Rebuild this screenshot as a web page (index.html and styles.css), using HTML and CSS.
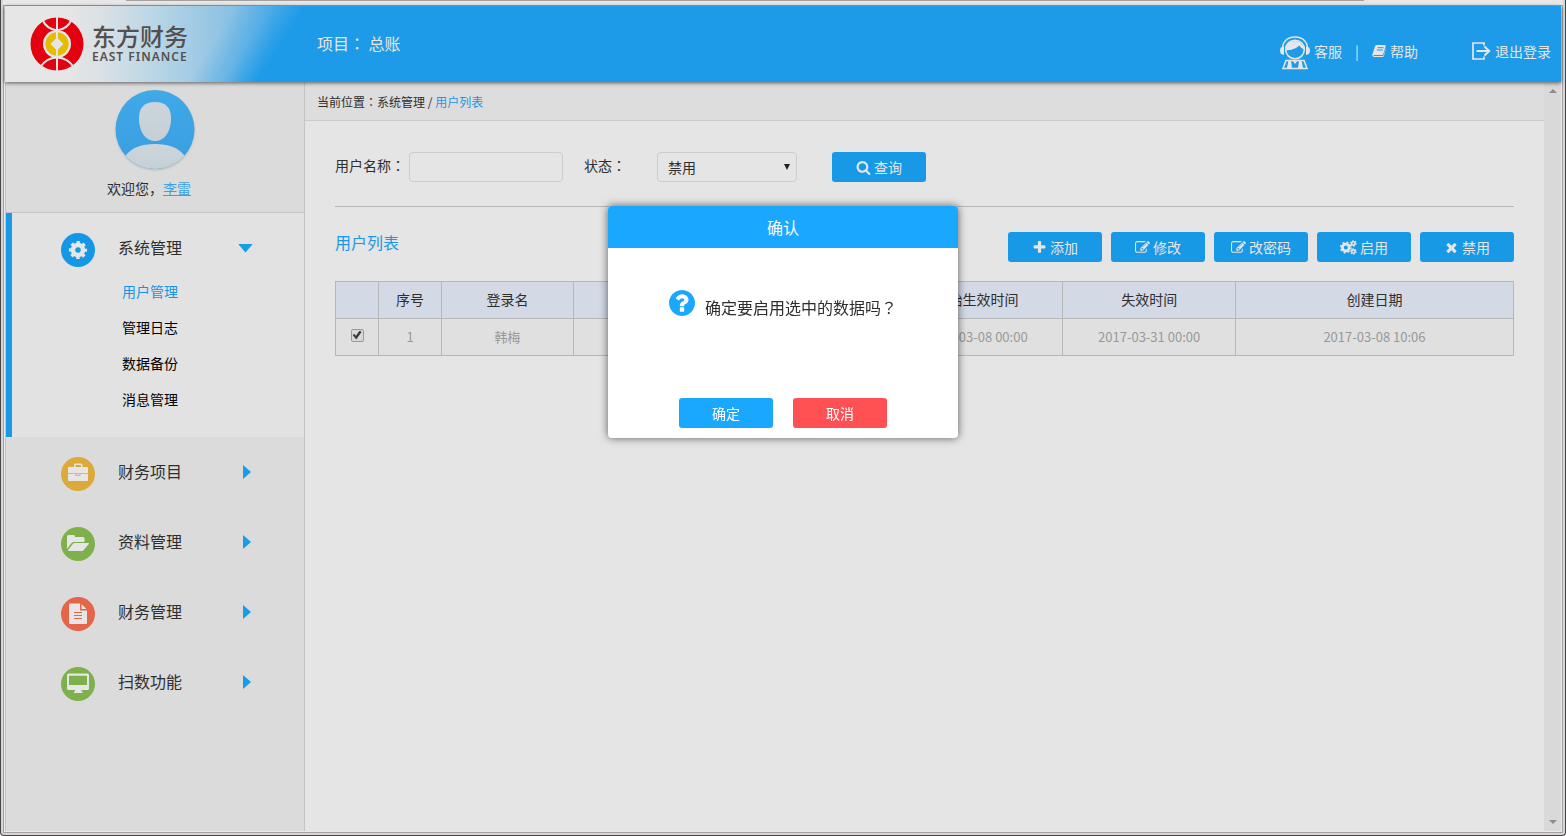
FILE: index.html
```html
<!DOCTYPE html>
<html lang="zh-CN">
<head>
<meta charset="utf-8">
<title>东方财务 - 用户列表</title>
<link rel="stylesheet" href="styles.css">
</head>
<body>
<svg class="defs" aria-hidden="true">
  <symbol id="i-search" viewBox="0 0 1792 1792"><path d="M1216 832q0-185-131.5-316.5t-316.5-131.5-316.5 131.5-131.5 316.5 131.5 316.5 316.5 131.5 316.5-131.5 131.5-316.5zm512 832q0 52-38 90t-90 38q-54 0-90-38l-343-342q-179 124-399 124-143 0-273.5-55.5t-225-150-150-225-55.5-273.5 55.5-273.5 150-225 225-150 273.5-55.5 273.5 55.5 225 150 150 225 55.5 273.5q0 220-124 399l343 343q37 37 37 90z"/></symbol>
  <symbol id="i-plus" viewBox="0 0 1792 1792"><path d="M1600 736v192q0 40-28 68t-68 28h-416v416q0 40-28 68t-68 28h-192q-40 0-68-28t-28-68v-416h-416q-40 0-68-28t-28-68v-192q0-40 28-68t68-28h416v-416q0-40 28-68t68-28h192q40 0 68 28t28 68v416h416q40 0 68 28t28 68z"/></symbol>
  <symbol id="i-edit" viewBox="0 0 1792 1792"><path d="M888 1184l116-116-152-152-116 116v56h96v96h56zm440-720q-16-16-33 1l-350 350q-17 17-1 33t33-1l350-350q17-17 1-33zm80 594v190q0 119-84.500 203.500t-203.500 84.500h-832q-119 0-203.500-84.500t-84.500-203.500v-832q0-119 84.500-203.500t203.500-84.500h832q63 0 117 25 15 7 18 23 3 17-9 29l-49 49q-14 14-32 8-23-6-45-6h-832q-66 0-113 47t-47 113v832q0 66 47 113t113 47h832q66 0 113-47t47-113v-126q0-13 9-22l64-64q15-15 35-7t20 29zm-96-738l288 288-672 672h-288v-288zm444 132l-92 92-288-288 92-92q28-28 68-28t68 28l152 152q28 28 28 68t-28 68z"/></symbol>
  <symbol id="i-times" viewBox="0 0 1792 1792"><path d="M1490 1322q0 40-28 68l-136 136q-28 28-68 28t-68-28l-294-294-294 294q-28 28-68 28t-68-28l-136-136q-28-28-28-68t28-68l294-294-294-294q-28-28-28-68t28-68l136-136q28-28 68-28t68 28l294 294 294-294q28-28 68-28t68 28l136 136q28 28 28 68t-28 68l-294 294 294 294q28 28 28 68z"/></symbol>
  <symbol id="i-question" viewBox="128 128 1536 1536"><path d="M1024 1376v-192q0-14-9-23t-23-9h-192q-14 0-23 9t-9 23v192q0 14 9 23t23 9h192q14 0 23-9t9-23zm256-672q0-88-55.500-163t-138.500-116-170-41q-243 0-371 213-15 24 8 42l132 100q7 6 19 6 16 0 25-12 53-68 86-92 34-24 86-24 48 0 85.500 26t37.500 59q0 38-20 61t-68 45q-63 28-115.500 86.500t-52.500 125.500v36q0 14 9 23t23 9h192q14 0 23-9t9-23q0-19 21.500-49.500t54.500-49.500q32-18 49-28.500t46-35 44.500-48 28-60.500 12.500-81zm384 192q0 209-103 385.500t-279.500 279.500-385.500 103-385.500-103-279.500-279.500-103-385.500 103-385.500 279.500-279.500 385.500-103 385.500 103 279.500 279.500 103 385.500z"/></symbol>
  <symbol id="i-cogs" viewBox="0 0 16 14">
    <g fill="none" stroke="currentColor">
      <circle cx="5.500" cy="7" r="3.200" stroke-width="2.600"/>
      <circle cx="5.500" cy="7" r="4.800" stroke-width="1.600" stroke-dasharray="1.900 1.870"/>
      <circle cx="12.600" cy="3.200" r="1.600" stroke-width="1.500"/>
      <circle cx="12.600" cy="3.200" r="2.500" stroke-width="1.200" stroke-dasharray="1.300 1.320"/>
      <circle cx="12.600" cy="10.800" r="1.600" stroke-width="1.500"/>
      <circle cx="12.600" cy="10.800" r="2.500" stroke-width="1.200" stroke-dasharray="1.300 1.320"/>
    </g>
  </symbol>
</svg>

<div class="window">
<div class="strip"><div class="strip-line"></div></div>
<div class="frame">
  <header class="header">
    <div class="brand">
      <svg class="brand-mark" viewBox="0 0 54 54" aria-hidden="true">
        <circle cx="27" cy="27" r="26.500" fill="#e3000f"/>
        <g fill="none" stroke="#e6e6e6" stroke-width="2">
          <path d="M12.500 3Q17 12.500 27 13.200Q37 12.500 41.500 3"/>
          <path d="M10.500 50Q16 41 27 40.500Q38 41 43.500 50"/>
          <path d="M27 0V14M27 40V54"/>
        </g>
        <circle cx="27" cy="27" r="14" fill="#e6e6e6"/>
        <circle cx="27" cy="27" r="11.700" fill="#e5bd00"/>
        <path d="M27 20.500L33.500 27L27 33.500L20.500 27Z" fill="#e6e6e6"/>
        <path d="M27 13V41" stroke="#e6e6e6" stroke-width="2"/>
      </svg>
      <div class="brand-text">
        <div class="brand-cn">东方财务</div>
        <div class="brand-en">EAST FINANCE</div>
      </div>
    </div>
    <div class="project">项目<span lang="zh-TW" class="punct">：</span> 总账</div>
    <nav class="tools">
      <a href="#" class="tool">
        <svg class="ic-service" viewBox="0 -4 30 38" aria-hidden="true">
          <g fill="none" stroke="currentColor">
            <circle cx="15" cy="13.500" r="9.300" stroke-width="1.600"/>
            <path d="M2.500 13C2.500 5 8 1 15 1S27.500 5 27.500 13" stroke-width="1.500"/>
            <path d="M3 32.500L6 24.500H24L27 32.500Z" stroke-width="1.500"/>
          </g>
          <path d="M0 14.500Q0 10.500 4 10.500V19Q0 18.500 0 14.500ZM30 14.500Q30 10.500 26 10.500V19Q30 18.500 30 14.500Z" fill="currentColor"/>
          <path d="M6 14.500Q6 5 15 5Q19 5 21 7Q18 13.500 6 14.500ZM20 7Q23.500 9 24.300 13.500Q20.500 12 19 9Z" fill="currentColor"/>
          <path d="M8.500 24.500H11L12 32.500H6.800ZM19 24.500H21.500L23.200 32.500H18ZM12.500 24.500L15 28L17.500 24.500Z" fill="currentColor"/>
        </svg>
        <span>客服</span>
      </a>
      <span class="bar">|</span>
      <a href="#" class="tool">
        <svg class="ic-book" viewBox="0 0 14 14" aria-hidden="true">
          <path d="M4.500 1H13Q14 1.200 13.700 2.300L11.300 10Q11 11 10 11H2.200Q1.400 11.200 1.700 12H10.500Q11.300 12 11.600 11.300L13.800 4.500L14 5L11.900 12Q11.500 13 10.500 13H2Q0 12.800 .3 10.700L3 2.300Q3.400 1.200 4.500 1Z" fill="currentColor"/>
          <path d="M5.600 3.700H11.600M4.900 6H10.900" stroke="#1e9be8" stroke-width="1"/>
        </svg>
        <span>帮助</span>
      </a>
      <a href="#" class="tool tool-exit">
        <svg class="ic-exit" viewBox="0 0 19 18" aria-hidden="true">
          <g fill="none" stroke="currentColor" stroke-width="1.700">
            <path d="M12 3.500V1H1V17H12V14.500"/>
            <path d="M4.500 9H17M12.500 4.500L17.200 9L12.500 13.500" stroke-width="2"/>
          </g>
        </svg>
        <span>退出登录</span>
      </a>
    </nav>
  </header>

  <div class="columns">
    <aside class="sidebar">
      <div class="profile">
        <svg class="avatar" viewBox="0 0 80 80" aria-hidden="true">
          <defs>
            <clipPath id="av"><circle cx="40" cy="39.500" r="39.500"/></clipPath>
            <linearGradient id="avb" x1="0" y1="0" x2="0" y2="1"><stop offset="0" stop-color="#40a9e8"/><stop offset="1" stop-color="#3a9de0"/></linearGradient>
            <linearGradient id="avf" x1="0" y1="0" x2="0" y2="1"><stop offset="0" stop-color="#ccd5dc"/><stop offset="1" stop-color="#c5d0d6"/></linearGradient>
          </defs>
          <g clip-path="url(#av)">
            <rect width="80" height="80" fill="url(#avb)"/>
            <path d="M40 12C50 12 56 17 56 28C56 41 50 51 40 51S24 41 24 28C24 17 30 12 40 12Z" fill="url(#avf)"/>
            <path d="M11 65Q20 54 40 54T69 65V80H11Z" fill="url(#avf)"/>
          </g>
        </svg>
        <div class="welcome">欢迎您，<a href="#">李雷</a></div>
      </div>
      <nav>
        <div class="group open">
          <a class="group-head" href="#">
            <svg class="badge blue" viewBox="0 0 34 34" aria-hidden="true">
              <circle cx="17" cy="17" r="5" fill="none" stroke="currentColor" stroke-width="4.500"/>
              <circle cx="17" cy="17" r="7.800" fill="none" stroke="currentColor" stroke-width="2.600" stroke-dasharray="3.400 2.726" stroke-dashoffset="1.700"/>
            </svg>
            <span class="label">系统管理</span>
            <svg class="arrow" viewBox="0 0 16 16" aria-hidden="true"><path d="M1 5Q0 4 1 4H14Q15 4 14 5L7.500 12.500Z"/></svg>
          </a>
          <ul class="sub">
            <li><a href="#" class="current">用户管理</a></li>
            <li><a href="#">管理日志</a></li>
            <li><a href="#">数据备份</a></li>
            <li><a href="#">消息管理</a></li>
          </ul>
        </div>
        <div class="group">
          <a class="group-head" href="#">
            <svg class="badge yellow" viewBox="0 0 34 34" aria-hidden="true">
              <path d="M13 10V8Q13 6.500 14.500 6.500H20Q21.500 6.500 21.500 8V10H26Q27 10 27 11V16.200H7V11Q7 10 8 10ZM14.500 8V10H20V8Z" fill="currentColor" fill-rule="evenodd"/>
              <path d="M7 17H14.500V18.800H19.500V17H27V23Q27 24 26 24H8Q7 24 7 23Z" fill="currentColor"/>
              <path d="M15.500 17H18.500V18H15.500Z" fill="currentColor"/>
            </svg>
            <span class="label">财务项目</span>
            <svg class="arrow" viewBox="0 0 16 16" aria-hidden="true"><path d="M5 1L13 8L5 15Z"/></svg>
          </a>
        </div>
        <div class="group">
          <a class="group-head" href="#">
            <svg class="badge green" viewBox="0 0 34 34" aria-hidden="true">
              <path d="M6 22V9.500Q6 8 7.500 8H12.500Q14 8 14 9.500V10H22Q23.500 10 23.500 11.500V15H13Q11.500 15 10.500 16Z" fill="currentColor"/>
              <path d="M13.500 16H27.500Q28.300 16.300 27.800 17L22.500 23.300Q22 24 21 24H7.500Q6.600 23.600 7.200 23L12 16.800Q12.600 16 13.500 16Z" fill="currentColor"/>
            </svg>
            <span class="label">资料管理</span>
            <svg class="arrow" viewBox="0 0 16 16" aria-hidden="true"><path d="M5 1L13 8L5 15Z"/></svg>
          </a>
        </div>
        <div class="group">
          <a class="group-head" href="#">
            <svg class="badge red" viewBox="0 0 34 34" aria-hidden="true">
              <path d="M9 6.500H19V13.500H26V26Q26 27 25 27H9Q8 27 8 26V7.500Q8 6.500 9 6.500ZM20.500 7L25.500 12H20.500Z" fill="currentColor"/>
              <path d="M13 15.500H21M13 18.500H21M13 21.500H21" stroke="#e46549" stroke-width="1.200"/>
            </svg>
            <span class="label">财务管理</span>
            <svg class="arrow" viewBox="0 0 16 16" aria-hidden="true"><path d="M5 1L13 8L5 15Z"/></svg>
          </a>
        </div>
        <div class="group">
          <a class="group-head" href="#">
            <svg class="badge green" viewBox="0 0 34 34" aria-hidden="true">
              <path fill-rule="evenodd" d="M7.500 6.500H26.500Q28 6.500 28 8V21.500Q28 23 26.500 23H20.500V24.500H21.500V26H13V24.500H14V23H7.500Q6 23 6 21.500V8Q6 6.500 7.500 6.500ZM8 8.700V18H26V8.700Z" fill="currentColor"/>
            </svg>
            <span class="label">扫数功能</span>
            <svg class="arrow" viewBox="0 0 16 16" aria-hidden="true"><path d="M5 1L13 8L5 15Z"/></svg>
          </a>
        </div>
      </nav>
    </aside>

    <main class="main">
      <div class="crumbs">当前位置<span lang="zh-TW" class="punct">：</span>系统管理 / <a href="#">用户列表</a></div>
      <div class="content">
        <form class="filters">
          <label for="uname">用户名称<span lang="zh-TW" class="punct">：</span></label>
          <input id="uname" type="text" class="text-box">
          <label for="state" class="state-label">状态<span lang="zh-TW" class="punct">：</span></label>
          <span class="select-wrap">
            <select id="state"><option>禁用</option></select>
          </span>
          <button type="button" class="btn"><svg class="ic"><use href="#i-search"/></svg>查询</button>
        </form>
        <div class="list-head">
          <h2>用户列表</h2>
          <div class="actions">
            <button type="button" class="btn"><svg class="ic"><use href="#i-plus"/></svg>添加</button>
            <button type="button" class="btn"><svg class="ic"><use href="#i-edit"/></svg>修改</button>
            <button type="button" class="btn"><svg class="ic"><use href="#i-edit"/></svg>改密码</button>
            <button type="button" class="btn"><svg class="ic wide"><use href="#i-cogs"/></svg>启用</button>
            <button type="button" class="btn"><svg class="ic"><use href="#i-times"/></svg>禁用</button>
          </div>
        </div>
        <table class="users">
          <colgroup><col class="c-check"><col class="c-no"><col class="c-login"><col class="c-name"><col class="c-date"><col class="c-date"><col></colgroup>
          <thead>
            <tr><th></th><th>序号</th><th>登录名</th><th></th><th>开始生效时间</th><th>失效时间</th><th>创建日期</th></tr>
          </thead>
          <tbody>
            <tr><td><input type="checkbox" class="tick" aria-label="选择韩梅" checked></td><td>1</td><td>韩梅</td><td></td><td>2017-03-08 00:00</td><td>2017-03-31 00:00</td><td>2017-03-08 10:06</td></tr>
          </tbody>
        </table>
      </div>
    </main>

    <div class="scroll" aria-hidden="true">
      <svg viewBox="0 0 8 4"><path d="M0 4L4 0L8 4Z"/></svg>
      <svg viewBox="0 0 8 4"><path d="M0 0L4 4L8 0Z"/></svg>
    </div>
  </div>
</div>
</div>

<div class="overlay">
  <section class="dialog" role="dialog" aria-labelledby="dlg-title">
    <h3 id="dlg-title">确认</h3>
    <div class="message">
      <svg class="ic-question" aria-hidden="true"><use href="#i-question"/></svg>
      <p>确定要启用选中的数据吗<span lang="zh-TW" class="punct">？</span></p>
    </div>
    <div class="dialog-actions">
      <button type="button" class="btn ok">确定</button>
      <button type="button" class="btn cancel">取消</button>
    </div>
  </section>
</div>
</body>
</html>
```
FILE: styles.css
```css
* { box-sizing: border-box; }

body {
  margin: 0;
  font-family: "Noto Sans CJK SC", sans-serif;
  font-size: 14px;
  line-height: 20px;
  color: #2e2e2e;
  background: #fff;
}

a { color: inherit; text-decoration: none; }
h2, h3, p, ul { margin: 0; padding: 0; font-weight: 400; }
ul { list-style: none; }
button, input, select { font: inherit; }

.defs { position: absolute; width: 0; height: 0; }
.punct { font-family: "Noto Sans CJK TC", sans-serif; }

/* window chrome */
.window {
  display: flex;
  flex-direction: column;
  min-height: 100vh;
  padding: 0 2px 2px;
  background: #d6d6d6;
  border: 1px solid #484446;
  border-top: 0;
  border-radius: 0 0 4px 4px;
}
.strip { height: 5px; background: #e8e8e8; padding: 0 199px 0 123px; }
.strip-line { height: 1px; background: #a5a1a1; }
.frame {
  flex: 1;
  display: flex;
  flex-direction: column;
  padding: 0 1px 1px;
  background: #e9e9e9;
  border: 1px solid #a5a1a1;
}

/* header */
.header {
  position: relative;
  display: flex;
  align-items: center;
  height: 76px;
  background: #1e9be8;
  color: #e6e6e6;
  box-shadow: 0 1px 4px rgba(0, 0, 0, .6);
}
.brand {
  display: flex;
  align-items: center;
  gap: 8px;
  width: 312px;
  height: 76px;
  padding: 0 0 1px 25px;
  background:
    linear-gradient(122deg, rgba(30, 155, 232, 0) 195px, rgba(30, 155, 232, .35) 226px, #1e9be8 254px),
    linear-gradient(90deg, #e6e6e6 60px, #dbe1e5 95px, #b9d6e6 150px, #92c4e4 215px, #66b3e6 270px);
}
.brand-mark { width: 54px; height: 54px; }
.brand-text { color: #55504e; }
.brand-cn { font-size: 24px; line-height: 24px; font-weight: 500; }
.brand-en {
  margin-top: 2px;
  font-family: "Noto Sans", sans-serif;
  font-size: 12px;
  line-height: 14px;
  font-weight: 600;
  letter-spacing: 1px;
}
.project { flex: 1; padding-bottom: 2px; font-size: 16px; }
.tools {
  display: flex;
  align-items: center;
  padding: 14px 10px 0 0;
}
.tool { display: flex; align-items: center; gap: 4px; }
.tool-exit { margin-left: 54px; }
.bar { width: 30px; text-align: center; }
.ic-service { width: 30px; height: 38px; }
.ic-book { width: 14px; height: 14px; }
.ic-exit { width: 19px; height: 18px; }

/* columns */
.columns { flex: 1; display: flex; }
.sidebar {
  width: 300px;
  background: #dbdbdb;
  border: solid #c5c3c4;
  border-width: 0 1px;
}
.profile {
  display: flex;
  flex-direction: column;
  align-items: center;
  gap: 8px;
  height: 131px;
  padding-top: 8px;
  border-bottom: 1px solid #c4c4c4;
}
.avatar { width: 80px; height: 80px; filter: drop-shadow(0 1px 1px rgba(0, 0, 0, .15)); }
.welcome { padding-right: 12px; }
.welcome a { color: #3ea1e4; text-decoration: underline; }

.group { padding-bottom: 10px; border-left: 6px solid transparent; }
.group.open { padding-bottom: 20px; background: #e2e2e2; border-left-color: #1a9ae6; }
.group-head {
  display: flex;
  align-items: flex-start;
  height: 60px;
  padding: 20px 50px 0 49px;
  font-size: 16px;
}
.badge { width: 34px; height: 34px; border-radius: 50%; color: #e6e6e6; }
.blue { background: #1697e6; }
.yellow { background: #dda93b; }
.green { background: #7eb04b; }
.red { background: #e46549; }
.label { flex: 1; margin-left: 23px; line-height: 28px; }
.arrow { width: 16px; height: 30px; fill: #149de8; }
.sub a { display: block; padding-left: 110px; line-height: 36px; color: #000; }
.sub .current { color: #1a93e6; }

/* main */
.main { flex: 1; background: #e5e5e5; }
.crumbs {
  padding: 10px 12px 8px;
  font-size: 12px;
  background: #ddd;
  border-bottom: 1px solid #cbcbcb;
}
.crumbs a, .list-head h2 { color: #1e96e6; }
.content { padding: 31px 30px; }
.filters {
  display: flex;
  align-items: center;
  padding-bottom: 24px;
  border-bottom: 1px solid #b7b7b7;
}
.filters label { padding-bottom: 4px; }
.text-box {
  width: 154px;
  height: 30px;
  margin: 0 21px 0 4px;
  padding: 0 8px;
  background: transparent;
  border: 1px solid #cdcdcd;
  border-radius: 4px;
}
.state-label { width: 73px; }
.select-wrap { position: relative; width: 140px; margin-right: 35px; }
.select-wrap select {
  display: block;
  width: 100%;
  height: 30px;
  padding: 0 10px;
  appearance: none;
  color: #2e2e2e;
  background: transparent;
  border: 1px solid #cdcdcd;
  border-radius: 4px;
}
.select-wrap::after {
  content: "";
  position: absolute;
  right: 7px;
  top: 12px;
  border: solid transparent;
  border-width: 6px 3px 0;
  border-top-color: #222;
}
.btn {
  display: flex;
  align-items: center;
  justify-content: center;
  gap: 3px;
  width: 94px;
  height: 30px;
  padding: 0;
  color: #e6e6e6;
  background: #1899e6;
  border: 0;
  border-radius: 3px;
}
.ic { width: 15px; height: 15px; fill: currentColor; }
.ic.wide { width: 17px; }
.list-head {
  display: flex;
  justify-content: space-between;
  padding: 25px 0 19px;
}
.list-head h2 { font-size: 16px; line-height: 20px; }
.actions { display: flex; gap: 9px; }

.users {
  width: 100%;
  table-layout: fixed;
  border-collapse: collapse;
  text-align: center;
}
.c-check { width: 43px; }
.c-no { width: 63px; }
.c-login { width: 11.2%; }
.c-name { width: 26.9%; }
.c-date { width: 14.65%; }
.users th, .users td { height: 37px; padding: 0; border: 1px solid #b7b7b7; }
.users th { padding-bottom: 2px; background: #d3d9e5; font-weight: 400; }
.users td { background: #e0e0e0; color: #999; font-size: 13px; }
.tick {
  position: relative;
  display: block;
  width: 13px;
  height: 13px;
  margin: 0 auto 4px;
  appearance: none;
  background: #d8d8d8;
  border: 1px solid #999;
  border-radius: 2px;
}
.tick:checked::after {
  content: "";
  position: absolute;
  inset: 1px;
  background: #3a3a3a;
  clip-path: polygon(0 50%, 20% 38%, 38% 58%, 80% 0, 100% 16%, 42% 100%);
}

.scroll {
  display: flex;
  flex-direction: column;
  align-items: center;
  justify-content: space-between;
  width: 17px;
  padding: 7px 0;
  background: #d9d9d9;
}
.scroll svg { width: 8px; height: 4px; fill: #8d8d8d; }

/* confirm dialog */
.overlay {
  position: fixed;
  inset: 0;
  display: flex;
  align-items: flex-start;
  justify-content: center;
  padding-top: 206px;
}
.dialog {
  width: 350px;
  background: #fff;
  border-radius: 4px;
  box-shadow: 0 0 8px rgba(0, 0, 0, .6);
  overflow: hidden;
}
.dialog h3 {
  font-size: 16px;
  line-height: 42px;
  color: #fff;
  text-align: center;
  background: #1aa8ff;
}
.message {
  display: flex;
  gap: 10px;
  height: 150px;
  padding: 42px 60px 0 61px;
  font-size: 16px;
}
.message p { line-height: 34px; white-space: nowrap; }
.ic-question { flex: none; width: 26px; height: 26px; fill: #1aa8ff; }
.dialog-actions {
  display: flex;
  justify-content: center;
  gap: 20px;
  padding-bottom: 10px;
}
.ok { color: #fff; background: #1aa8ff; }
.cancel { color: #fff; background: #ff5053; }
```
